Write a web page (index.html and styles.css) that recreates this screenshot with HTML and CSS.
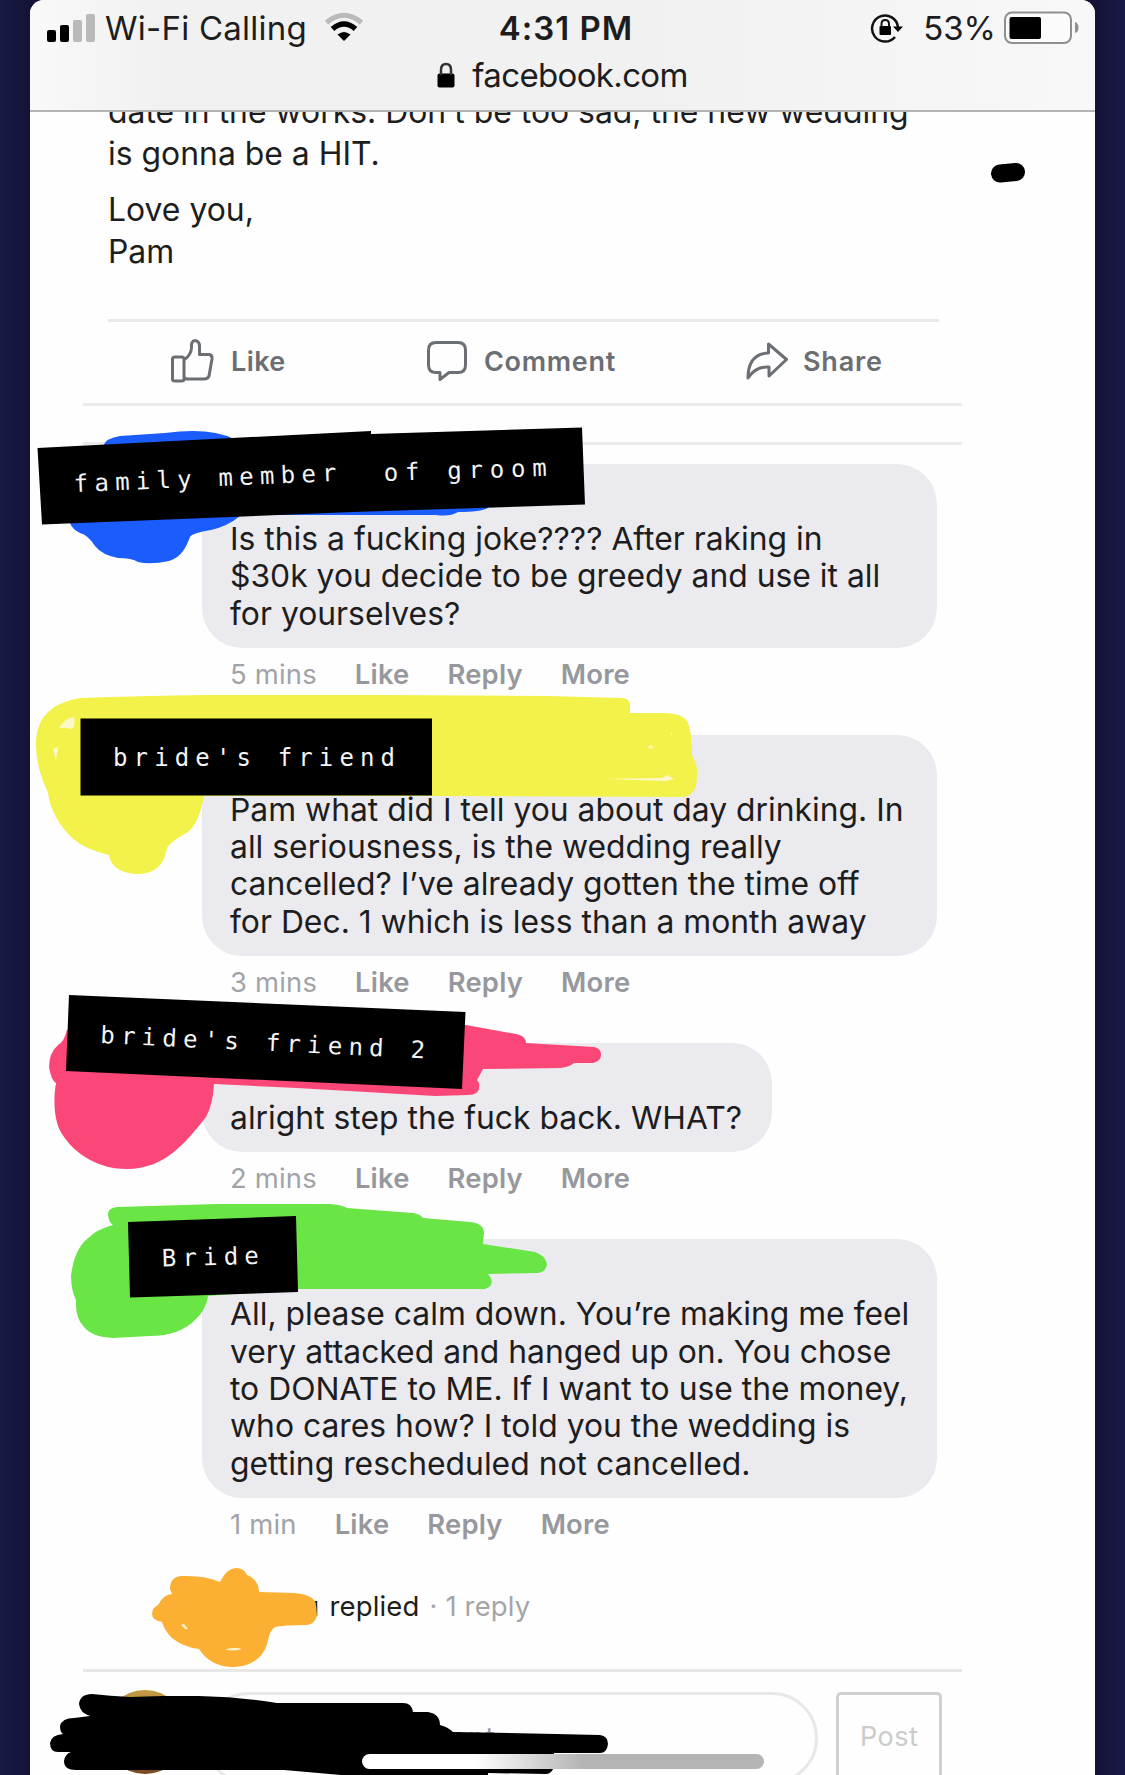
FILE: index.html
```html
<!doctype html>
<html lang="en">

<head>
    <meta charset="utf-8">
    <meta name="viewport" content="width=device-width, initial-scale=1">
    <title>facebook.com</title>
    <link rel="stylesheet" href="styles.css">
</head>

<body>
    <div class="phone">
        <header class="top-bar">
            <div class="status">
                <div class="status-left">
                    <svg class="signal" width="48" height="30" viewBox="0 0 48 30">
                        <rect x="0" y="17" width="9" height="12" rx="2"/>
                        <rect x="13" y="12" width="9" height="17" rx="2"/>
                        <rect x="26" y="7" width="9" height="22" rx="2" fill="#b9b9b9"/>
                        <rect x="39" y="1" width="9" height="28" rx="2" fill="#b9b9b9"/>
                    </svg>
                    <span class="carrier">Wi-Fi Calling</span>
                    <svg class="wifi" width="40" height="30" viewBox="0 0 40 30">
                        <path d="M2.5 10.5Q20-4 37.500 10.500" fill="none" stroke="#bababa" stroke-width="5"/>
                        <path d="M8.500 17Q20 7 31.500 17" fill="none" stroke="#000" stroke-width="5.500"/>
                        <path d="M20 29L13.500 22.500Q20 17.500 26.500 22.500Z"/>
                    </svg>
                </div>
                <div class="clock">4:31 PM</div>
                <div class="status-right">
                    <svg width="34" height="32" viewBox="0 0 34 32">
                        <path d="M28 15A13 13 0 1 0 25 25" fill="none" stroke="#111" stroke-width="2.500"/>
                        <path d="M23 14.500H33L28 20Z"/>
                        <rect x="9.500" y="14" width="11.500" height="9" rx="1"/>
                        <path d="M11.500 15V12Q11.500 8 15.200 8Q19 8 19 12V15" fill="none" stroke="#111" stroke-width="2"/>
                    </svg>
                    <span class="percent">53%</span>
                    <svg width="75" height="34" viewBox="0 0 75 34">
                        <rect x="1" y="1.500" width="66" height="30.500" rx="7" fill="#fbfbfb" stroke="#8f8f8f" stroke-width="2"/>
                        <rect x="5.500" y="6" width="31.500" height="22" rx="2"/>
                        <path d="M71 11Q74.500 12 74.500 16.500T71 22Z" fill="#8f8f8f"/>
                    </svg>
                </div>
            </div>
            <div class="address">
                <svg width="18" height="26" viewBox="0 0 18 26">
                    <rect x="0.500" y="11.500" width="17" height="14" rx="2"/>
                    <path d="M4 13V8Q4 2 9 2T14 8V13" fill="none" stroke="#333" stroke-width="2.500"/>
                </svg>
                <span>facebook.com</span>
            </div>
        </header>

        <main class="page">
            <div class="post">
                <p>date in the works. Don’t be too sad, the new wedding<br>is gonna be a HIT.</p>
                <p>Love you,<br>Pam</p>
            </div>
            <div class="actions">
                <div class="action like">
                    <svg width="43" height="44" viewBox="0 0 43 44">
                        <path d="M1.500 20Q1.500 18 4 18H10.500Q13 18 13 20V40Q13 42 10.500 42H4Q1.500 42 1.500 40ZM13 21Q20 16 20.500 9Q20 1.500 24 1.500Q29 2 28.500 9V15.500H38Q41.500 16 41 20L38 37Q37 40 33 40H15L13 38"/>
                    </svg>
                    <span>Like</span>
                </div>
                <div class="action comment">
                    <svg width="40" height="40" viewBox="0 0 40 40">
                        <path d="M9 1.500H31Q38.500 1.500 38.500 9V24Q38.500 31.500 31 31.500H22L13 38.500V31.500H9Q1.500 31.500 1.500 24V9Q1.500 1.500 9 1.500Z"/>
                    </svg>
                    <span>Comment</span>
                </div>
                <div class="action share">
                    <svg width="42" height="40" viewBox="0 0 42 40">
                        <path d="M22.500 3L40.500 18.500L23 35V26Q10 25 2 37Q2 13 22.500 12Z"/>
                    </svg>
                    <span>Share</span>
                </div>
            </div>
            <div class="divider"></div>

            <div class="comments">
                <article>
                    <div class="bubble">
                        <span>Is this a fucking joke???? After raking in</span>
                        <span>$30k you decide to be greedy and use it all</span>
                        <span>for yourselves?</span>
                    </div>
                    <div class="meta"><time>5 mins</time><b>Like</b><b>Reply</b><b>More</b></div>
                </article>
                <article>
                    <div class="bubble">
                        <span>Pam what did I tell you about day drinking. In</span>
                        <span>all seriousness, is the wedding really</span>
                        <span>cancelled? I’ve already gotten the time off</span>
                        <span>for Dec. 1 which is less than a month away</span>
                    </div>
                    <div class="meta"><time>3 mins</time><b>Like</b><b>Reply</b><b>More</b></div>
                </article>
                <article>
                    <div class="bubble short">
                        <span>alright step the fuck back. WHAT?</span>
                    </div>
                    <div class="meta"><time>2 mins</time><b>Like</b><b>Reply</b><b>More</b></div>
                </article>
                <article>
                    <div class="bubble">
                        <span>All, please calm down. You’re making me feel</span>
                        <span>very attacked and hanged up on. You chose</span>
                        <span>to DONATE to ME. If I want to use the money,</span>
                        <span>who cares how? I told you the wedding is</span>
                        <span>getting rescheduled not cancelled.</span>
                    </div>
                    <div class="meta"><time>1 min</time><b>Like</b><b>Reply</b><b>More</b></div>
                </article>
            </div>

            <div class="replied"><span>u</span><span class="who">replied</span><span class="count">· 1 reply</span></div>

            <div class="composer">
                <div class="avatar"></div>
                <div class="input">Write a comment...</div>
                <div class="post-button">Post</div>
            </div>
        </main>
    </div>

    <!-- marker scribbles and name labels over the screen -->
    <svg class="markup" width="1125" height="1775" viewBox="0 0 1125 1775">
        <path d="M1000 173.500L1016 172" stroke="#000" stroke-width="18" stroke-linecap="round"/>

        <g class="blue">
            <path d="M103 446Q106 438 120 436L165 433Q210 427 234 439L240 516Q228 526 211 530Q192 533 190 537C186 547 182 557 169 561Q150 565 138 562Q132 558 118 558Q102 555 95 546Q88 535 80 533Q72 529 70 523Z"/>
            <path d="M235 506H490Q486 512 458 512Q450 517 436 515H240Z"/>
        </g>
        <path d="M37.500 448L371 431V434L582 427.500L585 504.500L353 512L42 524.500Z"/>
        <g class="label">
            <text x="74" y="492" textLength="263" transform="rotate(-2.400 74 492)">family member</text>
            <text x="384" y="481" textLength="163" transform="rotate(-1.800 384 481)">of groom</text>
        </g>

        <path class="yellow" d="M80 698Q140 696 204 695H387L548 696L622 698Q630 699 630 705V713H663Q684 713 688 723Q692 733 692 755Q699 768 697 776Q697 797 681 797L432 796H204Q199 823 188 832Q170 842 167 848C163 874 144 874 135 874Q112 872 109 855Q86 850 72 838Q51 817 48 793Q35 765 36 740Q38 705 80 698Z"/>
        <path class="gap" d="M59 728Q65 718 74 717Q76 728 71 729Q64 727 59 728ZM53 749L58 747L56 760ZM647 747L652 745L653 749ZM604 779L662 778L667 775L674 779L666 781ZM671 731L672 734L671 735Z"/>
        <path d="M80.500 718.500H432V795.500H80.500Z"/>
        <g class="label">
            <text x="113" y="766" textLength="282">bride's friend</text>
        </g>

        <path class="pink" d="M67 1030Q64 1042 58 1045Q49 1053 49 1067Q51 1080 56 1083C53 1100 54 1122 62 1134C76 1156 100 1169 127 1169C165 1169 186 1142 206 1117Q213 1104 214 1084L297 1088L435 1096L468 1095Q481 1095 479 1083L477 1080L483 1069L560 1068Q570 1067 574 1063H593Q601 1061 601 1055Q601 1048 594 1047L526 1043Q526 1036 516 1034L466 1025Z"/>
        <path d="M69 995L465.500 1012L462 1089L66 1071Z"/>
        <g class="label">
            <text x="100" y="1043" textLength="325" transform="rotate(2.700 100 1043)">bride's friend 2</text>
        </g>

        <path class="green" d="M108 1213Q109 1208 117 1207L217 1204H330Q343 1205 347 1208L413 1213Q420 1214 423 1218L470 1222Q483 1223 484 1232L483 1244L535 1252Q546 1256 547 1264Q546 1272 538 1273L488 1274Q495 1282 489 1287L485 1289H298L208 1296Q206 1310 196 1319Q180 1336 150 1336L113 1338Q92 1337 84 1327Q75 1318 76 1300Q71 1290 71 1276Q74 1250 87 1239Q97 1229 113 1225Q108 1222 108 1213Z"/>
        <path d="M128 1222L296 1216L298 1292L130 1297.500Z"/>
        <g class="label">
            <text x="162" y="1266.500" textLength="97" transform="rotate(-1.600 162 1266)">Bride</text>
        </g>

        <path class="orange" d="M170 1589Q170 1577 181 1576Q205 1575 220 1582Q227 1568 236 1568Q244 1568 247 1575Q259 1580 259 1592L295 1593Q315 1595 316 1605L317 1616Q314 1625 306 1625Q284 1625 275 1627Q270 1630 268 1640C265 1656 253 1667 231 1667Q210 1666 199 1649Q183 1647 172 1638Q164 1630 162 1622Q152 1620 152 1614Q152 1608 158 1605Q164 1594 172 1594Z"/>
        <path class="gap" d="M181 1625L184 1624L188 1629L185 1629ZM225 1649.500Q234 1647 242 1649Q236 1651.500 225 1649.500Z"/>

        <path d="M79 1704Q80 1694 92 1694Q110 1696 130 1697L163 1696H199Q240 1697 277 1703H403Q412 1703 413 1712H428Q440 1714 440 1725Q448 1727 453 1732L556 1734L600 1735Q608 1736 608 1744Q607 1753 600 1753H554V1766Q552 1774 546 1774L488 1773V1775H341L284 1770H76Q64 1770 64 1761Q65 1754 71 1752H58Q50 1752 50 1743Q51 1735 63 1734Q60 1732 60 1726Q62 1718 74 1718L90 1716Q80 1713 79 1704Z"/>
    </svg>

    <div class="home-bar"></div>
</body>
</html>
```
FILE: styles.css
```css
* {
    box-sizing: border-box;
}
body {
    margin: 0;
    height: 1775px;
    overflow: hidden;
    position: relative;
    font-family: Inter, "Liberation Sans", sans-serif;
    background: linear-gradient(90deg, #181a45 0, #141336 30px, #141336 1095px, #19194a 1125px);
    color: #1d1d20;
}
.phone {
    margin: 0 30px;
    height: 1775px;
    display: flex;
    flex-direction: column;
    background: #fefefe;
    border-radius: 14px 14px 0 0;
    overflow: hidden;
}

/* status bar */
.top-bar {
    height: 112px;
    flex: none;
    border-bottom: 2px solid #b4b4b4;
    background: linear-gradient(90deg, #f9f9f9, #f1f1f1 12%, #f1f1f1 60%, #f8f8f8);
    font-size: 33px;
    line-height: 40px;
}
.status {
    display: grid;
    grid-template-columns: 1fr auto 1fr;
    align-items: center;
    padding: 8px 16px 0 17px;
    height: 48px;
}
.status-left,
.status-right {
    display: flex;
    align-items: center;
}
.status-right {
    justify-content: flex-end;
}
.carrier {
    margin: 0 17px 0 10px;
    letter-spacing: 0.250px;
    white-space: nowrap;
}
.signal {
    margin-top: -1px;
}
.wifi {
    margin-top: -2px;
}
.clock {
    font-weight: 600;
    letter-spacing: 1px;
    padding-left: 6px;
}
.percent {
    margin: 0 8px 0 19px;
}
.address {
    display: flex;
    justify-content: center;
    align-items: center;
    gap: 17px;
    height: 54px;
    letter-spacing: -0.650px;
}

/* post */
.page {
    overflow: hidden;
    flex: 1;
}
.post {
    margin: -21px 0 0 78px;
    font-size: 31.900px;
    line-height: 42px;
    height: 228px;
    white-space: nowrap;
}
.post p {
    margin: 0 0 14px;
}
.actions {
    display: flex;
    margin: 0 156px 0 78px;
    height: 84px;
    border-top: 3px solid #e9e9e9;
    font-size: 27px;
    font-weight: 600;
    color: #6b6e73;
}
.action {
    display: flex;
    align-items: center;
    gap: 17px;
    letter-spacing: 0.400px;
    padding-bottom: 3px;
}
.action svg {
    fill: none;
    stroke: #6b6e73;
    stroke-width: 3;
    stroke-linejoin: round;
}
.like {
    padding-left: 63px;
    width: 319px;
}
.comment {
    width: 319px;
    letter-spacing: 0.700px;
}
.share {
    gap: 15px;
    letter-spacing: 0.800px;
}
.divider {
    margin: 0 133px 0 53px;
    height: 42px;
    border-top: 3px solid #ebebeb;
    border-bottom: 3px solid #ebebeb;
}

/* comments */
.comments {
    margin: 19px 158px 0 172px;
}
.bubble {
    padding: 56px 0 16px 28px;
    border-radius: 40px;
    background: #ebeaef;
    font-size: 31.850px;
    line-height: 37.300px;
}
.short {
    width: 570px;
}
.bubble span {
    display: block;
    white-space: nowrap;
}
.meta {
    display: flex;
    gap: 38px;
    height: 87px;
    padding: 10px 0 0 28px;
    font-size: 27.400px;
    line-height: 33px;
    letter-spacing: 0.200px;
    color: #96989d;
}
.meta b {
    font-weight: 600;
}
.meta time {
    color: #a2a3a8;
}
.replied {
    display: flex;
    height: 84px;
    padding: 1px 0 0 273px;
    font-size: 27.500px;
    line-height: 40px;
    letter-spacing: 0.150px;
    gap: 10px;
}
.count {
    color: #a5a5a8;
}

/* comment form */
.composer {
    display: flex;
    align-items: flex-start;
    margin: 0 133px 0 53px;
    padding: 20px 20px 0 20px;
    border-top: 3px solid #e7e7e7;
}
.avatar {
    width: 84px;
    height: 84px;
    margin-top: -2px;
    border-radius: 50%;
    background: linear-gradient(#c39b45, #7a4a22);
}
.input {
    width: 618px;
    height: 92px;
    margin: 0 18px 0 16px;
    padding-left: 52px;
    border: 3px solid #e8e8e8;
    border-radius: 46px;
    font-size: 29px;
    letter-spacing: 0.300px;
    line-height: 85px;
    color: #9a9a9a;
}
.post-button {
    width: 106px;
    height: 92px;
    border: 3px solid #d0d0d0;
    border-radius: 5px;
    text-align: center;
    font-size: 27px;
    line-height: 84px;
    letter-spacing: 0.500px;
    color: #cbcbcb;
}

/* scribbles */
.markup {
    position: absolute;
    left: 0;
    top: 0;
}
.blue {
    fill: #1b5cfc;
}
.yellow {
    fill: #f2f24a;
}
.pink {
    fill: #fb4778;
}
.green {
    fill: #69e545;
}
.orange {
    fill: #fbb034;
}
.gap {
    fill: #fdf8c8;
}
.label {
    fill: #f4f4f4;
    font-family: "DejaVu Sans Mono", monospace;
    font-size: 24px;
}
.home-bar {
    position: absolute;
    left: 362px;
    top: 1754px;
    width: 402px;
    height: 15px;
    border-radius: 8px;
    background: linear-gradient(90deg, #fff 28%, #b4b4b4 55%);
}
```
